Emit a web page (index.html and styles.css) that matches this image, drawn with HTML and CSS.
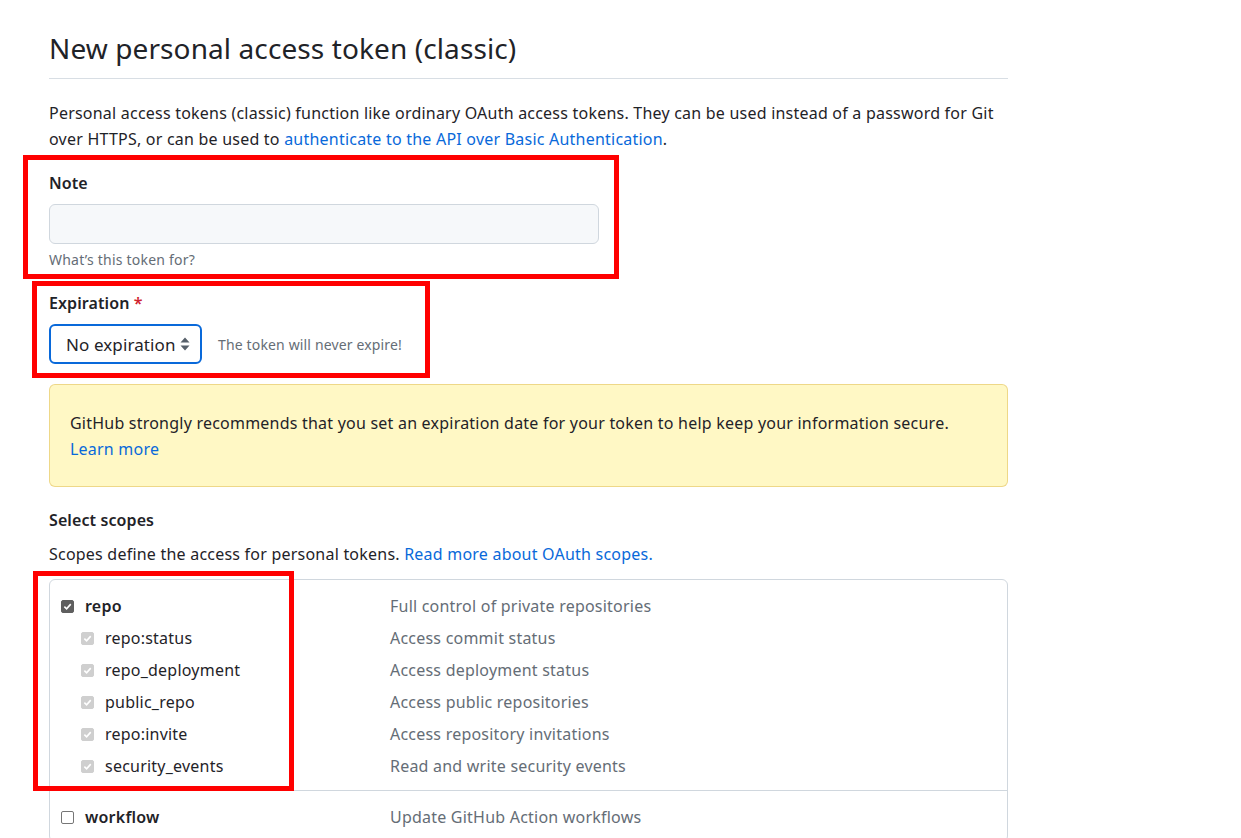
FILE: index.html
```html
<!DOCTYPE html>
<html>
<head>
<meta charset="utf-8">
<link rel="stylesheet" href="styles.css">
</head>
<body>
<div class="page">
  <div class="head">
    <h1 class="title">New personal access token (classic)</h1>
  </div>
  <p class="intro">Personal access tokens (classic) function like ordinary OAuth access tokens. They can be used instead of a password for Git over HTTPS, or can be used to <a class="link" href="#">authenticate to the API over Basic Authentication</a>.</p>

  <div class="group note-group">
    <div class="label">Note</div>
    <div class="input"></div>
    <div class="hint">What’s this token for?</div>
  </div>

  <div class="group exp-group">
    <div class="label">Expiration <span class="req">*</span></div>
    <div class="exp-row">
      <div class="select">
        <span>No expiration</span>
        <svg class="arrows" width="10" height="16" viewBox="0 0 10 16"><path d="M5 1.5 L9.5 6.5 H0.5 Z M5 14.5 L9.5 9.5 H0.5 Z" fill="#57606a"/></svg>
      </div>
      <span class="exp-hint">The token will never expire!</span>
    </div>
  </div>

  <div class="flash">
    <div>GitHub strongly recommends that you set an expiration date for your token to help keep your information secure.</div>
    <a class="link" href="#">Learn more</a>
  </div>

  <div class="label scopes-title">Select scopes</div>
  <p class="scopes-desc">Scopes define the access for personal tokens. <a class="link" href="#">Read more about OAuth scopes.</a></p>

  <div class="scopes">
    <div class="scope-group">
      <div class="row">
        <div class="name"><span class="cb checked"><svg width="9" height="9" viewBox="0 0 10 10"><path d="M1.5 5.2 L4 7.6 L8.6 2.4" fill="none" stroke="#fff" stroke-width="1.8"/></svg></span><b>repo</b></div>
        <div class="desc">Full control of private repositories</div>
      </div>
      <div class="row sub">
        <div class="name"><span class="cb disabled"><svg width="9" height="9" viewBox="0 0 10 10"><path d="M1.5 5.2 L4 7.6 L8.6 2.4" fill="none" stroke="#fff" stroke-width="1.8"/></svg></span>repo:status</div>
        <div class="desc">Access commit status</div>
      </div>
      <div class="row sub">
        <div class="name"><span class="cb disabled"><svg width="9" height="9" viewBox="0 0 10 10"><path d="M1.5 5.2 L4 7.6 L8.6 2.4" fill="none" stroke="#fff" stroke-width="1.8"/></svg></span>repo_deployment</div>
        <div class="desc">Access deployment status</div>
      </div>
      <div class="row sub">
        <div class="name"><span class="cb disabled"><svg width="9" height="9" viewBox="0 0 10 10"><path d="M1.5 5.2 L4 7.6 L8.6 2.4" fill="none" stroke="#fff" stroke-width="1.8"/></svg></span>public_repo</div>
        <div class="desc">Access public repositories</div>
      </div>
      <div class="row sub">
        <div class="name"><span class="cb disabled"><svg width="9" height="9" viewBox="0 0 10 10"><path d="M1.5 5.2 L4 7.6 L8.6 2.4" fill="none" stroke="#fff" stroke-width="1.8"/></svg></span>repo:invite</div>
        <div class="desc">Access repository invitations</div>
      </div>
      <div class="row sub">
        <div class="name"><span class="cb disabled"><svg width="9" height="9" viewBox="0 0 10 10"><path d="M1.5 5.2 L4 7.6 L8.6 2.4" fill="none" stroke="#fff" stroke-width="1.8"/></svg></span>security_events</div>
        <div class="desc">Read and write security events</div>
      </div>
    </div>
    <div class="scope-group">
      <div class="row">
        <div class="name"><span class="cb"></span><b>workflow</b></div>
        <div class="desc">Update GitHub Action workflows</div>
      </div>
    </div>
  </div>

  <div class="mark mark-note"></div>
  <div class="mark mark-exp"></div>
  <div class="mark mark-scopes"></div>
</div>
</body>
</html>
```

FILE: styles.css
```css
* { box-sizing: border-box; }
html, body { margin: 0; padding: 0; background: #fff; }
body {
  font-family: "Noto Sans", "Open Sans", sans-serif;
  font-size: 16px;
  letter-spacing: 0.22px;
  color: #1f2328;
  height: 838px;
  overflow: hidden;
}
.page {
  position: relative;
  margin-left: 49px;
  width: 959px;
}
.link { color: #0969da; text-decoration: none; }
.head {
  padding-top: 28px;
  padding-bottom: 10px;
  border-bottom: 1px solid #d8dee4;
}
.title {
  margin: 0;
  font-size: 28px;
  font-weight: 400;
  line-height: 40px;
  letter-spacing: 0.1px;
}
.intro {
  margin: 21px 0 0;
  line-height: 26px;
}
.label {
  font-weight: 600;
  line-height: 24px;
  letter-spacing: 0.1px;
}
.note-group { margin-top: 19px; }
.input {
  margin-top: 9px;
  width: 550px;
  height: 40px;
  background: #f6f8fa;
  border: 1px solid #d0d7de;
  border-radius: 6px;
}
.hint {
  margin-top: 6px;
  font-size: 14px;
  line-height: 20px;
  color: #656d76;
}
.exp-group { margin-top: 21px; }
.req { color: #cf222e; }
.exp-row {
  margin-top: 9px;
  display: flex;
  align-items: center;
  gap: 16px;
}
.select {
  width: 153px;
  height: 40px;
  border: 2px solid #0969da;
  border-radius: 6px;
  display: flex;
  align-items: center;
  justify-content: space-between;
  padding: 0 10px 0 15px;
  font-size: 17px;
  letter-spacing: 0.1px;
}
.arrows { display: block; }
.exp-hint {
  font-size: 14px;
  color: #656d76;
  letter-spacing: 0.15px;
}
.flash {
  margin-top: 20px;
  background: #fff8c5;
  border: 1px solid rgba(212, 167, 44, 0.4);
  border-radius: 6px;
  padding: 25px 20px 24px;
  line-height: 26px;
}
.scopes-title { margin-top: 21px; }
.scopes-desc {
  margin: 10px 0 0;
  line-height: 24px;
}
.scopes {
  margin-top: 13px;
  border: 1px solid #d0d7de;
  border-radius: 6px;
}
.scope-group { padding: 10px 0 8px; }
.scope-group + .scope-group { border-top: 1px solid #d0d7de; }
.row {
  display: flex;
  align-items: center;
  height: 32px;
  padding-left: 11px;
}
.row.sub { padding-left: 31px; }
.name {
  width: 329px;
  display: flex;
  align-items: center;
  gap: 11px;
}
.row.sub .name { width: 309px; }
.name b { font-weight: 600; }
.desc { color: #656d76; }
.cb {
  width: 13px;
  height: 13px;
  border-radius: 2px;
  border: 1px solid #767676;
  background: #fff;
  display: flex;
  align-items: center;
  justify-content: center;
  flex: none;
}
.cb.checked { background: #5f5f5f; border-color: #5f5f5f; }
.cb.disabled { background: #cfcfcf; border-color: #cfcfcf; }
.mark {
  position: absolute;
  border: 5px solid #ff0000;
  pointer-events: none;
}
.mark-note { left: -26px; top: 155px; width: 596px; height: 124px; }
.mark-exp { left: -17px; top: 281px; width: 398px; height: 97px; }
.mark-scopes { left: -16px; top: 571px; width: 261px; height: 220px; }
```
